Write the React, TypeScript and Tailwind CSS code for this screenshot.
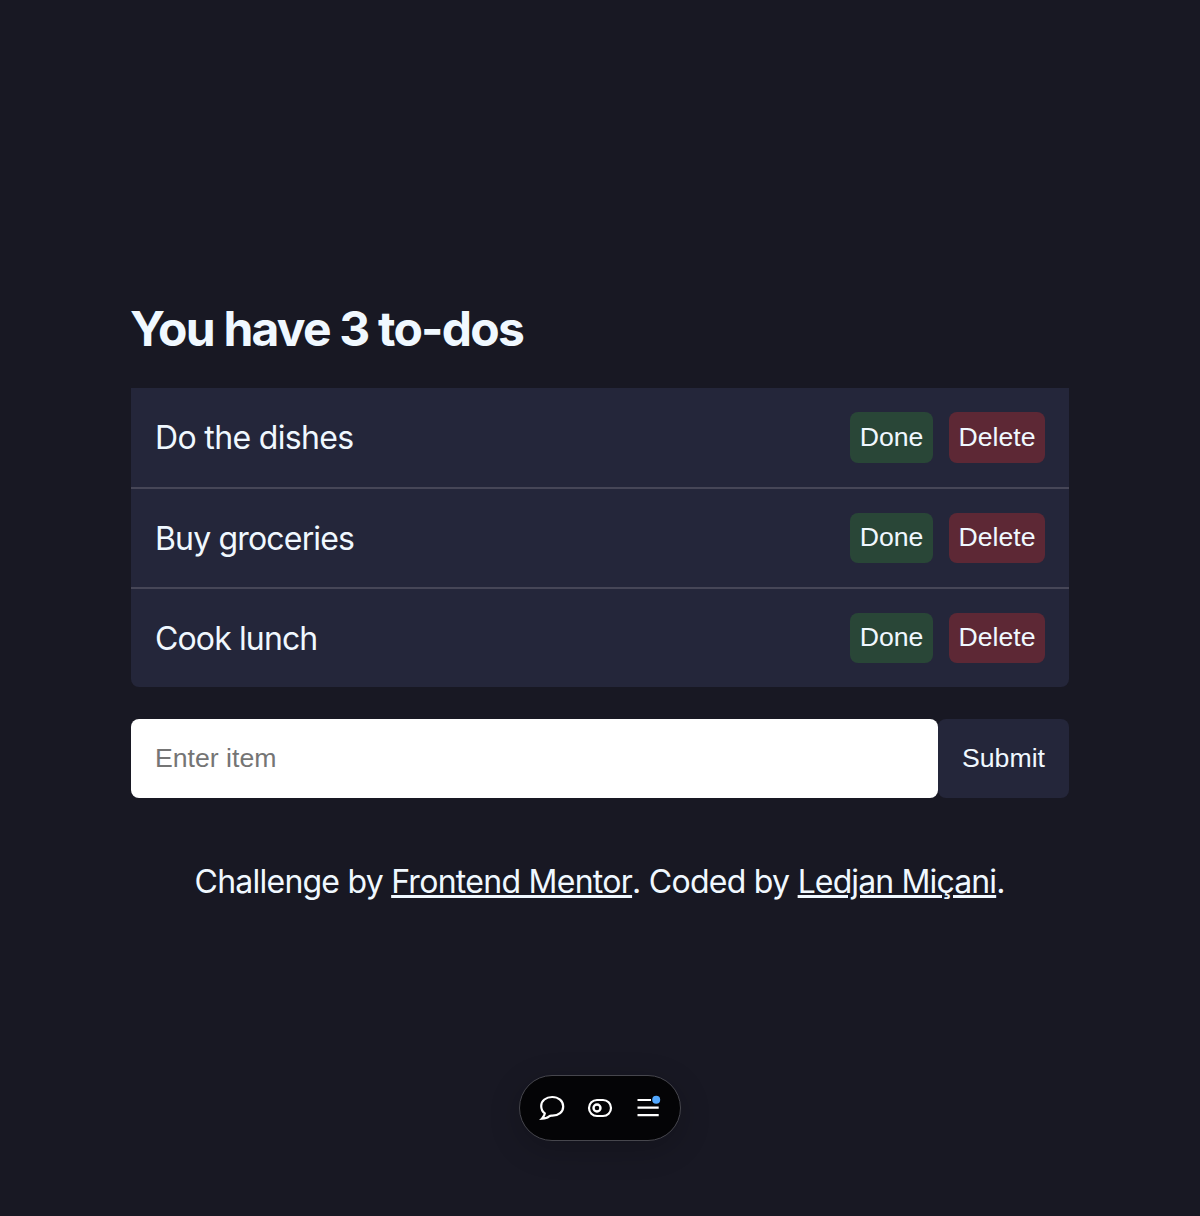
const todos = [
  { text: 'Do the dishes', row: 'h-[101px] border-b-2', label: 'tracking-[-0.65px]', button: 'h-[51px] pb-0.5' },
  { text: 'Buy groceries', row: 'h-[100px] border-b-2', label: 'pt-px tracking-[-0.83px]', button: 'h-[50px] pb-0.5' },
  { text: 'Cook lunch', row: 'h-[98px] rounded-b-lg', label: 'pt-px tracking-[-0.87px]', button: 'h-[50px] pb-0.5' },
];

const buttonBase =
  "flex items-center justify-center rounded-lg font-['Liberation_Sans',sans-serif] text-[26.67px] leading-[30px] text-[#f0f8ff]";

export default function App() {
  return (
    <div className="flex h-[1216px] flex-col bg-[#181823] font-[Inter,sans-serif] text-[#f0f8ff]">
      <main className="mx-auto mt-[300px] w-[938px]">
        <h1 className="-ml-px h-[88px] pt-px text-[48px] leading-[56px] font-bold tracking-[-1.78px] whitespace-nowrap">
          You have 3 to-dos
        </h1>
        <ul>
          {todos.map((t) => (
            <li key={t.text} className={`flex items-center border-[#464657] bg-[#24263a] px-6 ${t.row}`}>
              <span className={`flex-1 text-[32px] leading-[39px] whitespace-nowrap ${t.label}`}>{t.text}</span>
              <div className="flex gap-4">
                <button className={`${buttonBase} w-[83px] bg-[#294637] ${t.button}`}>Done</button>
                <button className={`${buttonBase} w-24 bg-[#5d2835] ${t.button}`}>Delete</button>
              </div>
            </li>
          ))}
        </ul>
        <form className="mt-8 flex h-[79px]" onSubmit={(e) => e.preventDefault()}>
          <input
            className="min-w-0 flex-1 rounded-lg bg-white px-6 font-['Liberation_Sans',sans-serif] text-[26.67px] text-black placeholder:text-[#757575]"
            placeholder="Enter item"
          />
          <button className={`${buttonBase} w-[131px] bg-[#24263a] pb-0.5`}>Submit</button>
        </form>
        <footer className="mt-[64px] text-center text-[32px] leading-[40px] whitespace-nowrap">
          <span className="tracking-[-0.77px]">Challenge by </span>
          <a className="tracking-[-0.72px] underline">Frontend Mentor</a>
          <span className="tracking-[-0.73px]">. Coded by </span>
          <a className="tracking-[-0.87px] underline">Ledjan Miçani</a>.
        </footer>
      </main>
      <nav className="mx-auto mt-[173px] flex h-[66px] w-[162px] items-center justify-center gap-4 rounded-full border border-[#46464d] bg-[#040406] shadow-[0_8px_32px_rgba(0,0,0,0.2)]">
        <svg width="32" height="32" viewBox="0 0 32 32" fill="none" stroke="#fff" strokeWidth="2.2">
          <path d="M8.8 21.4C6.4 19.5 5.2 17 5.2 13.9C5.2 8.7 10 5 16.2 5S27.2 9 27.2 14.5S22.6 23.6 16.4 23.6C14.2 23.3 13.5 24 12.5 24.8C11.2 25.9 9.5 26.3 5.9 26.7C7.5 25 8.6 23.5 8.8 21.4Z" />
        </svg>
        <svg width="32" height="32" viewBox="0 0 32 32" fill="none" stroke="#fff" strokeWidth="2.2">
          <rect x="5" y="8" width="22" height="16" rx="8" />
          <circle cx="13" cy="16" r="3.5" strokeWidth="2.4" />
        </svg>
        <svg width="32" height="32" viewBox="0 0 32 32">
          <path d="M5.5 8H19M5.5 15.7H26.7M5.5 23.2H26.7" stroke="#fff" strokeWidth="2.2" />
          <circle cx="24.2" cy="7.7" r="4" fill="#52a8ff" />
        </svg>
      </nav>
    </div>
  );
}
